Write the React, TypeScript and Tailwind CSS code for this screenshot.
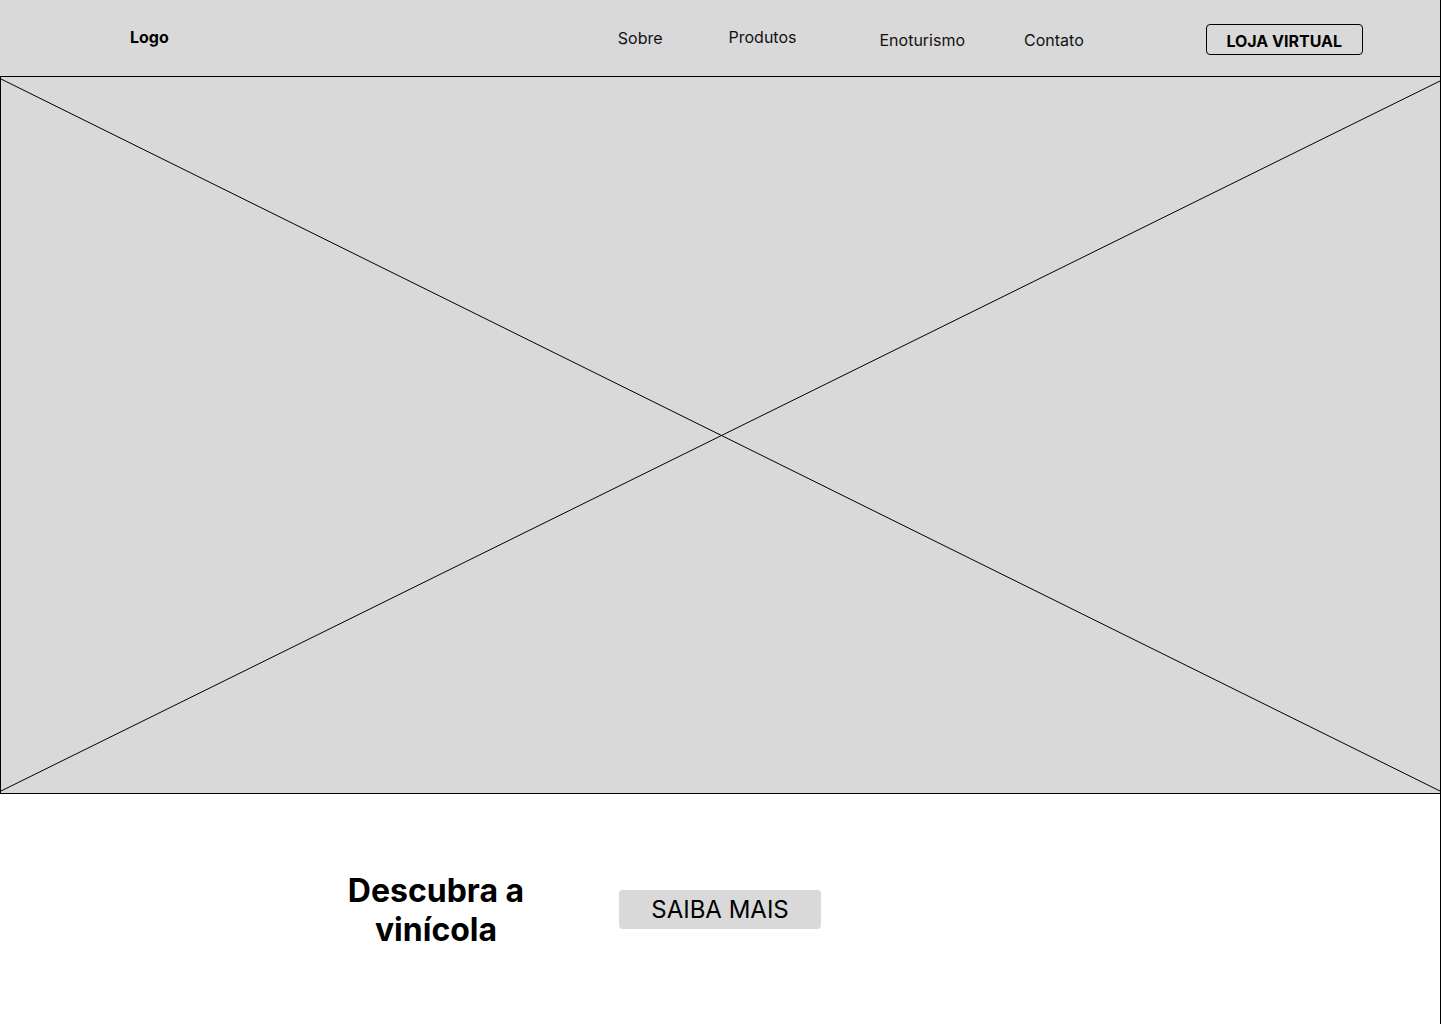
import React from "react";

export default function App() {
  return (
    <div
      className="w-[1441px] h-[1024px] bg-white border-r border-black text-black overflow-hidden"
      style={{ fontFamily: "Inter, 'Noto Sans', sans-serif" }}
    >
      <header className="h-[77px] bg-[#d9d9d9] border-b border-black flex items-start">
        <div className="ml-[130px] mt-[27px] text-[16px] font-bold leading-[20px]">Logo</div>
        <nav className="flex items-start ml-[449px] text-[16px] leading-[20px] text-[#111]">
          <a className="mt-[28px]">Sobre</a>
          <a className="mt-[27px] ml-[66px]">Produtos</a>
          <a className="mt-[30px] ml-[83px]">Enoturismo</a>
          <a className="mt-[30px] ml-[59px]">Contato</a>
        </nav>
        <button className="ml-[122px] mt-[24px] w-[157px] h-[31px] border border-black rounded-[4px] text-[16px] font-bold leading-[20px] flex items-center justify-center pt-[2px]">
          LOJA VIRTUAL
        </button>
      </header>
      <section className="relative h-[717px] bg-[#d9d9d9] border-l border-b border-black">
        <svg
          className="absolute inset-0 w-full h-full"
          viewBox="0 0 1439 716"
          preserveAspectRatio="none"
        >
          <line x1="0" y1="2" x2="1439" y2="714" stroke="#000" strokeWidth="1" vectorEffect="non-scaling-stroke" />
          <line x1="0" y1="714" x2="1439" y2="4" stroke="#000" strokeWidth="1" vectorEffect="non-scaling-stroke" />
        </svg>
      </section>
      <section className="flex items-start">
        <h2 className="ml-[316px] mt-[77px] w-[240px] text-center text-[32px] font-bold leading-[39px]">
          Descubra a
          <br />
          vinícola
        </h2>
        <button className="ml-[63px] mt-[96px] w-[202px] h-[39px] bg-[#d9d9d9] rounded-[4px] text-[24px] leading-[29px] flex items-center justify-center">
          SAIBA MAIS
        </button>
      </section>
    </div>
  );
}
